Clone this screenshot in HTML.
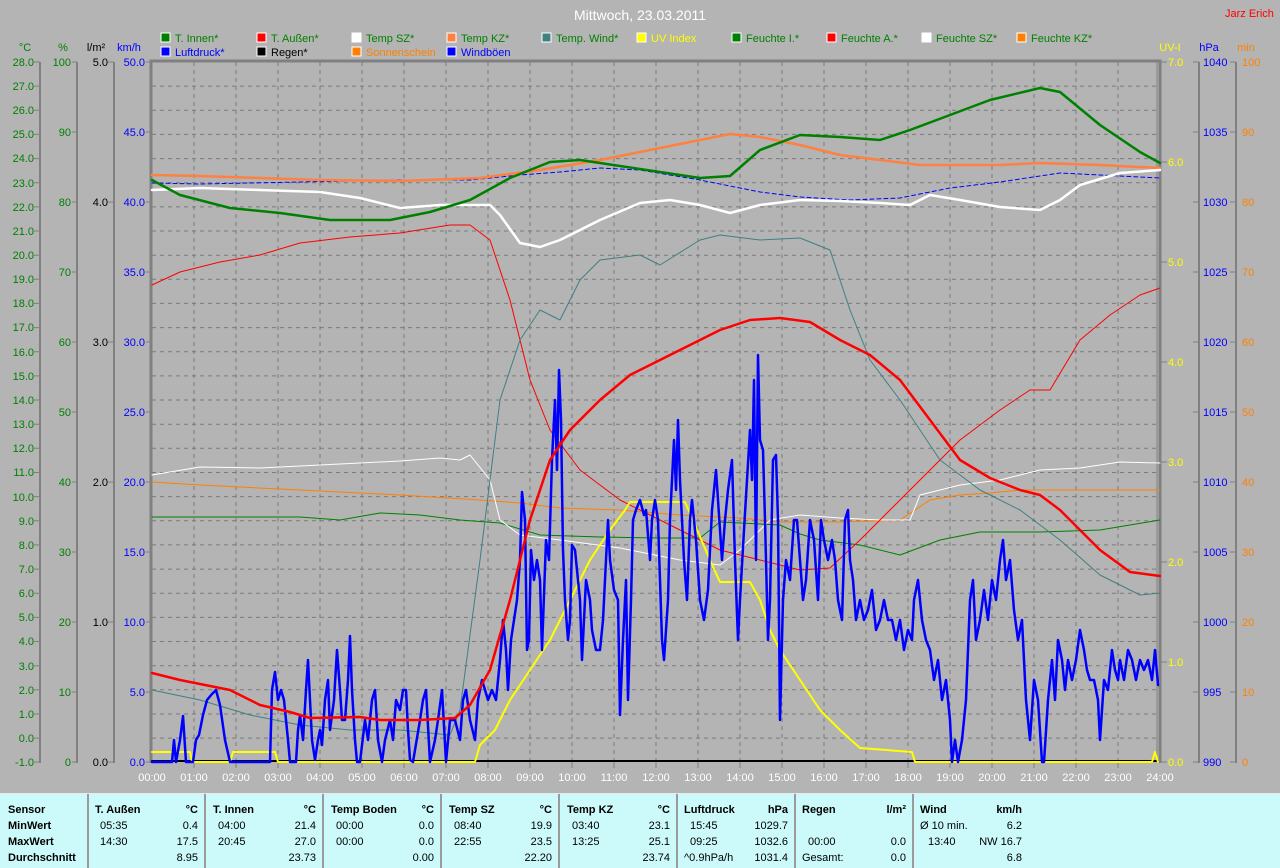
<!DOCTYPE html>
<html><head><meta charset="utf-8"><style>
html,body{margin:0;padding:0;background:#b4b4b4;}
body{width:1280px;height:867px;overflow:hidden;position:relative;font-family:"Liberation Sans",sans-serif;}
svg{position:absolute;left:0;top:0;}
#tbl{position:absolute;left:0;top:793px;width:1280px;height:74px;background:#ccfafa;border-top:1px solid #e8e8e8;}
.c{position:absolute;top:0;height:74px;border-left:2px solid #9a9a9a;}
.t{position:absolute;font-size:11px;color:#000;white-space:nowrap;margin-top:2px;}
.b{font-weight:bold;}
.r{text-align:right;}
</style></head><body>
<svg width="1280" height="867" viewBox="0 0 1280 867" font-family="Liberation Sans, sans-serif" font-size="11">
<text x="640" y="20" fill="#fff" font-size="14" text-anchor="middle">Mittwoch, 23.03.2011</text>
<text x="1225" y="17" fill="#f00" font-size="11">Jarz Erich</text>
<g font-size="11">
<rect x="161" y="33" width="9" height="9" fill="#008000" stroke="#fff"/><text x="175" y="42" fill="#008000">T. Innen*</text>
<rect x="257" y="33" width="9" height="9" fill="#f00" stroke="#fff"/><text x="271" y="42" fill="#008000">T. Außen*</text>
<rect x="352" y="33" width="9" height="9" fill="#fff" stroke="#fff"/><text x="366" y="42" fill="#008000">Temp SZ*</text>
<rect x="447" y="33" width="9" height="9" fill="#ff8040" stroke="#fff"/><text x="461" y="42" fill="#008000">Temp KZ*</text>
<rect x="542" y="33" width="9" height="9" fill="#408080" stroke="#fff"/><text x="556" y="42" fill="#008000">Temp. Wind*</text>
<rect x="637" y="33" width="9" height="9" fill="#ff0" stroke="#fff"/><text x="651" y="42" fill="#ff0">UV Index</text>
<rect x="732" y="33" width="9" height="9" fill="#008000" stroke="#fff"/><text x="746" y="42" fill="#008000">Feuchte I.*</text>
<rect x="827" y="33" width="9" height="9" fill="#f00" stroke="#fff"/><text x="841" y="42" fill="#008000">Feuchte A.*</text>
<rect x="922" y="33" width="9" height="9" fill="#fff" stroke="#fff"/><text x="936" y="42" fill="#008000">Feuchte SZ*</text>
<rect x="1017" y="33" width="9" height="9" fill="#ff8000" stroke="#fff"/><text x="1031" y="42" fill="#008000">Feuchte KZ*</text>
<rect x="161" y="47" width="9" height="9" fill="#00f" stroke="#fff"/><text x="175" y="56" fill="#00f">Luftdruck*</text>
<rect x="257" y="47" width="9" height="9" fill="#000" stroke="#fff"/><text x="271" y="56" fill="#000">Regen*</text>
<rect x="352" y="47" width="9" height="9" fill="#ff8000" stroke="#fff"/><text x="366" y="56" fill="#ff8000">Sonnenschein</text>
<rect x="447" y="47" width="9" height="9" fill="#00f" stroke="#fff"/><text x="461" y="56" fill="#00f">Windböen</text>
</g>
<text x="25" y="51" fill="#008000" text-anchor="middle">°C</text>
<text x="63" y="51" fill="#008000" text-anchor="middle">%</text>
<text x="96" y="51" fill="#000" text-anchor="middle">l/m²</text>
<text x="129" y="51" fill="#00f" text-anchor="middle">km/h</text>
<text x="1170" y="51" fill="#ff0" text-anchor="middle">UV-I</text>
<text x="1209" y="51" fill="#00f" text-anchor="middle">hPa</text>
<text x="1246" y="51" fill="#ff8000" text-anchor="middle">min</text>
<g stroke="#808080" stroke-width="2" fill="none">
<path d="M40 62V763M77 62V763M114 62V763M1199 62V763M1236 62V763"/>
</g>
<path stroke="#7a7a7a" stroke-width="1" stroke-dasharray="4,4" fill="none" d="M152 86.1H1158M152 110.3H1158M152 134.4H1158M152 158.6H1158M152 182.7H1158M152 206.9H1158M152 231H1158M152 255.2H1158M152 279.3H1158M152 303.4H1158M152 327.6H1158M152 351.7H1158M152 375.9H1158M152 400H1158M152 424.2H1158M152 448.3H1158M152 472.5H1158M152 496.6H1158M152 520.8H1158M152 544.9H1158M152 569.1H1158M152 593.2H1158M152 617.4H1158M152 641.5H1158M152 665.7H1158M152 689.8H1158M152 714H1158M152 738.1H1158M194 62V762M236 62V762M278 62V762M320 62V762M362 62V762M404 62V762M446 62V762M488 62V762M530 62V762M572 62V762M614 62V762M656 62V762M698 62V762M740 62V762M782 62V762M824 62V762M866 62V762M908 62V762M950 62V762M992 62V762M1034 62V762M1076 62V762M1118 62V762"/>
<path d="M151 763V61H1160V763" stroke="#808080" stroke-width="3" fill="none"/>
<path d="M1157 62V762" stroke="#808080" stroke-width="1" fill="none"/>
<path stroke="#808080" stroke-width="1" fill="none" d="M34 62H40M34 86.1H40M34 110.3H40M34 134.4H40M34 158.6H40M34 182.7H40M34 206.9H40M34 231H40M34 255.2H40M34 279.3H40M34 303.4H40M34 327.6H40M34 351.7H40M34 375.9H40M34 400H40M34 424.2H40M34 448.3H40M34 472.5H40M34 496.6H40M34 520.8H40M34 544.9H40M34 569.1H40M34 593.2H40M34 617.4H40M34 641.5H40M34 665.7H40M34 689.8H40M34 714H40M34 738.1H40M34 762H40
M72 62H77M72 132H77M72 202H77M72 272H77M72 342H77M72 412H77M72 482H77M72 552H77M72 622H77M72 692H77M72 762H77
M108 62H114M108 202H114M108 342H114M108 482H114M108 622H114M108 762H114
M146 62H151M146 132H151M146 202H151M146 272H151M146 342H151M146 412H151M146 482H151M146 552H151M146 622H151M146 692H151M146 762H151
M1161 62H1167M1161 162H1167M1161 262H1167M1161 362H1167M1161 462H1167M1161 562H1167M1161 662H1167M1161 762H1167
M1193 62H1199M1193 132H1199M1193 202H1199M1193 272H1199M1193 342H1199M1193 412H1199M1193 482H1199M1193 552H1199M1193 622H1199M1193 692H1199M1193 762H1199
M1230 62H1236M1230 132H1236M1230 202H1236M1230 272H1236M1230 342H1236M1230 412H1236M1230 482H1236M1230 552H1236M1230 622H1236M1230 692H1236M1230 762H1236
M194 762V768M236 762V768M278 762V768M320 762V768M362 762V768M404 762V768M446 762V768M488 762V768M530 762V768M572 762V768M614 762V768M656 762V768M698 762V768M740 762V768M782 762V768M824 762V768M866 762V768M908 762V768M950 762V768M992 762V768M1034 762V768M1076 762V768M1118 762V768"/>
<g fill="#008000" text-anchor="end">
<text x="34" y="66">28.0</text><text x="34" y="90">27.0</text><text x="34" y="114">26.0</text><text x="34" y="138">25.0</text><text x="34" y="162">24.0</text><text x="34" y="187">23.0</text><text x="34" y="211">22.0</text><text x="34" y="235">21.0</text><text x="34" y="259">20.0</text><text x="34" y="283">19.0</text><text x="34" y="307">18.0</text><text x="34" y="331">17.0</text><text x="34" y="356">16.0</text><text x="34" y="380">15.0</text><text x="34" y="404">14.0</text><text x="34" y="428">13.0</text><text x="34" y="452">12.0</text><text x="34" y="476">11.0</text><text x="34" y="501">10.0</text><text x="34" y="525">9.0</text><text x="34" y="549">8.0</text><text x="34" y="573">7.0</text><text x="34" y="597">6.0</text><text x="34" y="621">5.0</text><text x="34" y="645">4.0</text><text x="34" y="670">3.0</text><text x="34" y="694">2.0</text><text x="34" y="718">1.0</text><text x="34" y="742">0.0</text><text x="34" y="766">-1.0</text>
<text x="71" y="66">100</text><text x="71" y="136">90</text><text x="71" y="206">80</text><text x="71" y="276">70</text><text x="71" y="346">60</text><text x="71" y="416">50</text><text x="71" y="486">40</text><text x="71" y="556">30</text><text x="71" y="626">20</text><text x="71" y="696">10</text><text x="71" y="766">0</text>
</g>
<g fill="#000" text-anchor="end">
<text x="108" y="66">5.0</text><text x="108" y="206">4.0</text><text x="108" y="346">3.0</text><text x="108" y="486">2.0</text><text x="108" y="626">1.0</text><text x="108" y="766">0.0</text>
</g>
<g fill="#00f" text-anchor="end">
<text x="145" y="66">50.0</text><text x="145" y="136">45.0</text><text x="145" y="206">40.0</text><text x="145" y="276">35.0</text><text x="145" y="346">30.0</text><text x="145" y="416">25.0</text><text x="145" y="486">20.0</text><text x="145" y="556">15.0</text><text x="145" y="626">10.0</text><text x="145" y="696">5.0</text><text x="145" y="766">0.0</text>
</g>
<g fill="#ff0">
<text x="1168" y="66">7.0</text><text x="1168" y="166">6.0</text><text x="1168" y="266">5.0</text><text x="1168" y="366">4.0</text><text x="1168" y="466">3.0</text><text x="1168" y="566">2.0</text><text x="1168" y="666">1.0</text><text x="1168" y="766">0.0</text>
</g>
<g fill="#00f">
<text x="1203" y="66">1040</text><text x="1203" y="136">1035</text><text x="1203" y="206">1030</text><text x="1203" y="276">1025</text><text x="1203" y="346">1020</text><text x="1203" y="416">1015</text><text x="1203" y="486">1010</text><text x="1203" y="556">1005</text><text x="1203" y="626">1000</text><text x="1203" y="696">995</text><text x="1203" y="766">990</text>
</g>
<g fill="#ff8000">
<text x="1242" y="66">100</text><text x="1242" y="136">90</text><text x="1242" y="206">80</text><text x="1242" y="276">70</text><text x="1242" y="346">60</text><text x="1242" y="416">50</text><text x="1242" y="486">40</text><text x="1242" y="556">30</text><text x="1242" y="626">20</text><text x="1242" y="696">10</text><text x="1242" y="766">0</text>
</g>
<g fill="#fff" text-anchor="middle">
<text x="152" y="781">00:00</text><text x="194" y="781">01:00</text><text x="236" y="781">02:00</text><text x="278" y="781">03:00</text><text x="320" y="781">04:00</text><text x="362" y="781">05:00</text><text x="404" y="781">06:00</text><text x="446" y="781">07:00</text><text x="488" y="781">08:00</text><text x="530" y="781">09:00</text><text x="572" y="781">10:00</text><text x="614" y="781">11:00</text><text x="656" y="781">12:00</text><text x="698" y="781">13:00</text><text x="740" y="781">14:00</text><text x="782" y="781">15:00</text><text x="824" y="781">16:00</text><text x="866" y="781">17:00</text><text x="908" y="781">18:00</text><text x="950" y="781">19:00</text><text x="992" y="781">20:00</text><text x="1034" y="781">21:00</text><text x="1076" y="781">22:00</text><text x="1118" y="781">23:00</text><text x="1160" y="781">24:00</text>
</g>
<g fill="none" stroke-linejoin="round" stroke-linecap="round">
<polyline stroke="#008000" stroke-width="1" points="152,517 300,517 340,520 380,513 420,515 460,520 500,523 540,535 600,537 660,538 700,538 720,522 780,525 800,534 820,540 860,545 900,555 940,540 980,532 1040,532 1100,530 1160,520"/>
<polyline stroke="#ff8000" stroke-width="1" points="152,482 200,485 300,490 400,495 480,500 520,503 560,508 620,510 680,515 740,518 780,522 840,522 900,520 930,500 960,495 990,493 1020,490 1160,490"/>
<polyline stroke="#fff" stroke-width="1" points="152,475 200,467 260,468 320,465 400,461 440,458 460,460 470,455 490,480 500,520 520,535 560,540 620,548 680,560 720,565 740,550 770,520 800,515 840,518 880,520 910,520 920,495 960,485 1000,480 1040,470 1080,468 1120,462 1160,463"/>
<polyline stroke="#f00" stroke-width="1" points="152,285 180,272 220,262 260,255 300,243 350,237 400,233 450,225 470,225 490,240 510,300 530,380 550,430 580,470 620,500 680,530 720,550 760,560 800,570 830,568 860,540 900,500 930,470 960,440 1000,410 1030,390 1050,390 1080,340 1110,315 1140,295 1160,288"/>
<polyline stroke="#408080" stroke-width="1" points="152,690 200,700 250,715 300,725 350,730 400,730 450,735 460,710 480,560 500,400 520,340 540,310 560,320 580,280 600,260 640,255 660,265 700,240 720,235 760,240 800,238 830,250 850,310 870,360 900,400 940,460 980,490 1020,510 1060,540 1100,575 1140,595 1160,593"/>
<polyline stroke="#00f" stroke-width="1" stroke-dasharray="4,3" points="152,183 200,184 300,182 400,180 470,180 520,175 560,172 600,168 640,170 700,180 760,192 800,197 850,200 900,198 950,188 1000,182 1060,173 1100,175 1160,178"/>
<polyline stroke="#ff8040" stroke-width="2.5" points="152,175 200,176 260,178 320,180 400,181 480,178 540,170 600,160 650,150 700,140 730,134 760,137 800,145 840,155 880,160 920,165 1000,165 1040,163 1100,165 1160,168"/>
<polyline stroke="#fff" stroke-width="2.5" points="152,190 200,188 260,190 320,192 360,198 400,208 440,205 490,205 500,215 520,243 540,247 560,240 600,220 640,203 670,200 700,205 730,213 760,205 800,200 840,201 880,203 910,205 930,195 960,200 1000,207 1040,210 1060,200 1080,185 1120,173 1160,170"/>
<polyline stroke="#008000" stroke-width="2.5" points="152,180 180,195 230,208 280,213 330,220 390,220 430,212 470,200 510,178 550,162 580,160 620,166 660,172 700,178 730,176 760,150 800,135 840,137 880,140 910,130 950,115 990,100 1040,88 1060,92 1100,125 1140,152 1160,163"/>
<path stroke="#000" stroke-width="2" d="M152 761H1158"/>
<polyline stroke="#ff0" stroke-width="2" points="152,752 190,752 192,762 230,762 233,752 275,752 278,762 475,762 480,745 495,730 510,700 530,670 550,640 570,600 590,560 610,530 625,510 630,502 685,502 695,525 710,560 720,582 750,582 760,600 770,630 780,650 800,680 820,710 840,730 860,748 912,752 915,762 1152,762 1155,752 1158,762"/>
<polyline stroke="#00f" stroke-width="2.5" points="152,762 172,762 174,740 176,762 180,740 183,716 186,762 193,762 196,740 199,735 203,715 207,700 212,694 216,690 220,705 225,740 230,762 270,762 272,690 275,672 278,700 281,690 284,700 288,740 290,762 296,762 298,730 300,715 303,740 306,690 308,660 310,700 312,740 315,760 318,740 320,730 322,745 325,700 328,680 330,730 334,700 337,650 340,690 342,720 345,720 348,680 350,636 352,690 355,740 357,762 360,762 365,720 368,740 372,700 375,690 378,740 382,762 385,740 390,720 393,740 396,700 400,710 403,690 406,690 408,730 410,760 413,762 420,720 423,700 426,690 430,762 435,740 438,720 442,690 446,762 450,720 455,720 460,740 463,700 466,690 470,720 475,740 478,700 482,680 485,690 488,700 492,690 496,700 500,660 503,620 506,650 508,690 511,640 514,620 517,600 520,560 522,492 525,520 527,650 529,640 531,550 534,580 537,560 540,580 542,650 546,540 549,560 552,460 555,400 557,470 559,370 561,420 563,550 565,600 568,640 570,620 572,545 575,550 580,600 582,660 586,580 590,600 592,630 596,650 600,650 603,620 606,560 608,520 610,560 614,590 618,600 620,715 623,640 626,580 628,700 631,600 633,520 636,510 640,500 644,515 646,510 650,560 652,520 655,500 658,520 662,640 664,660 668,600 670,520 674,440 676,490 678,420 680,480 684,560 687,600 690,520 692,500 696,540 700,600 704,620 708,590 712,510 716,470 718,500 722,560 725,520 728,490 732,460 735,560 738,640 740,600 744,530 747,480 750,430 752,480 754,380 756,560 758,355 760,440 763,450 765,520 768,640 770,600 773,460 776,455 778,520 780,720 783,600 786,560 790,580 794,520 797,520 800,560 803,600 806,580 810,520 814,540 818,600 821,520 824,540 828,560 832,540 835,560 838,600 842,620 845,520 848,510 850,560 853,580 856,620 860,600 864,620 868,610 872,590 876,630 880,620 884,600 888,620 892,620 896,640 900,620 904,650 908,630 912,640 914,600 918,580 922,620 926,640 930,650 934,680 938,660 942,700 946,680 950,720 952,762 955,740 958,762 962,740 966,700 970,600 973,580 976,640 980,620 984,590 988,620 992,580 996,600 1000,560 1003,540 1006,580 1010,560 1014,610 1018,640 1022,620 1026,700 1030,740 1034,680 1038,700 1042,762 1044,762 1048,700 1052,660 1055,700 1058,640 1062,660 1065,690 1068,660 1072,680 1076,660 1080,630 1084,650 1087,670 1090,680 1094,680 1098,700 1100,740 1104,680 1108,690 1112,650 1115,670 1118,680 1120,660 1124,680 1128,650 1132,660 1136,680 1140,660 1144,670 1148,660 1152,680 1155,650 1158,685"/>
<polyline stroke="#f00" stroke-width="2.5" points="152,673 180,680 230,690 260,705 290,712 310,718 360,717 380,720 420,720 455,718 470,705 490,670 510,600 530,520 550,460 570,430 600,400 630,375 660,360 690,345 720,330 750,320 780,318 810,322 840,340 870,355 900,380 930,420 960,460 990,478 1020,490 1040,495 1060,510 1080,530 1100,550 1130,572 1160,576"/>
</g>
</svg>
<div id="tbl">
<div class="c" style="left:87px"></div><div class="c" style="left:204px"></div><div class="c" style="left:322px"></div><div class="c" style="left:440px"></div><div class="c" style="left:558px"></div><div class="c" style="left:676px"></div><div class="c" style="left:794px"></div><div class="c" style="left:912px"></div>
<div class="t b" style="left:8px;top:8px">Sensor</div>
<div class="t b" style="left:8px;top:24px">MinWert</div>
<div class="t b" style="left:8px;top:40px">MaxWert</div>
<div class="t b" style="left:8px;top:56px">Durchschnitt</div>

<div class="t b" style="left:95px;top:8px">T. Außen</div><div class="t b r" style="right:1082px;top:8px">°C</div>
<div class="t" style="left:100px;top:24px">05:35</div><div class="t r" style="right:1082px;top:24px">0.4</div>
<div class="t" style="left:100px;top:40px">14:30</div><div class="t r" style="right:1082px;top:40px">17.5</div>
<div class="t r" style="right:1082px;top:56px">8.95</div>

<div class="t b" style="left:213px;top:8px">T. Innen</div><div class="t b r" style="right:964px;top:8px">°C</div>
<div class="t" style="left:218px;top:24px">04:00</div><div class="t r" style="right:964px;top:24px">21.4</div>
<div class="t" style="left:218px;top:40px">20:45</div><div class="t r" style="right:964px;top:40px">27.0</div>
<div class="t r" style="right:964px;top:56px">23.73</div>

<div class="t b" style="left:331px;top:8px">Temp Boden</div><div class="t b r" style="right:846px;top:8px">°C</div>
<div class="t" style="left:336px;top:24px">00:00</div><div class="t r" style="right:846px;top:24px">0.0</div>
<div class="t" style="left:336px;top:40px">00:00</div><div class="t r" style="right:846px;top:40px">0.0</div>
<div class="t r" style="right:846px;top:56px">0.00</div>

<div class="t b" style="left:449px;top:8px">Temp SZ</div><div class="t b r" style="right:728px;top:8px">°C</div>
<div class="t" style="left:454px;top:24px">08:40</div><div class="t r" style="right:728px;top:24px">19.9</div>
<div class="t" style="left:454px;top:40px">22:55</div><div class="t r" style="right:728px;top:40px">23.5</div>
<div class="t r" style="right:728px;top:56px">22.20</div>

<div class="t b" style="left:567px;top:8px">Temp KZ</div><div class="t b r" style="right:610px;top:8px">°C</div>
<div class="t" style="left:572px;top:24px">03:40</div><div class="t r" style="right:610px;top:24px">23.1</div>
<div class="t" style="left:572px;top:40px">13:25</div><div class="t r" style="right:610px;top:40px">25.1</div>
<div class="t r" style="right:610px;top:56px">23.74</div>

<div class="t b" style="left:684px;top:8px">Luftdruck</div><div class="t b r" style="right:492px;top:8px">hPa</div>
<div class="t" style="left:690px;top:24px">15:45</div><div class="t r" style="right:492px;top:24px">1029.7</div>
<div class="t" style="left:690px;top:40px">09:25</div><div class="t r" style="right:492px;top:40px">1032.6</div>
<div class="t" style="left:684px;top:56px">^0.9hPa/h</div><div class="t r" style="right:492px;top:56px">1031.4</div>

<div class="t b" style="left:802px;top:8px">Regen</div><div class="t b r" style="right:374px;top:8px">l/m²</div>
<div class="t" style="left:808px;top:40px">00:00</div><div class="t r" style="right:374px;top:40px">0.0</div>
<div class="t" style="left:802px;top:56px">Gesamt:</div><div class="t r" style="right:374px;top:56px">0.0</div>

<div class="t b" style="left:920px;top:8px">Wind</div><div class="t b r" style="right:258px;top:8px">km/h</div>
<div class="t" style="left:920px;top:24px">Ø 10 min.</div><div class="t r" style="right:258px;top:24px">6.2</div>
<div class="t" style="left:928px;top:40px">13:40</div><div class="t r" style="right:258px;top:40px">NW 16.7</div>
<div class="t r" style="right:258px;top:56px">6.8</div>
</div>
</body></html>
